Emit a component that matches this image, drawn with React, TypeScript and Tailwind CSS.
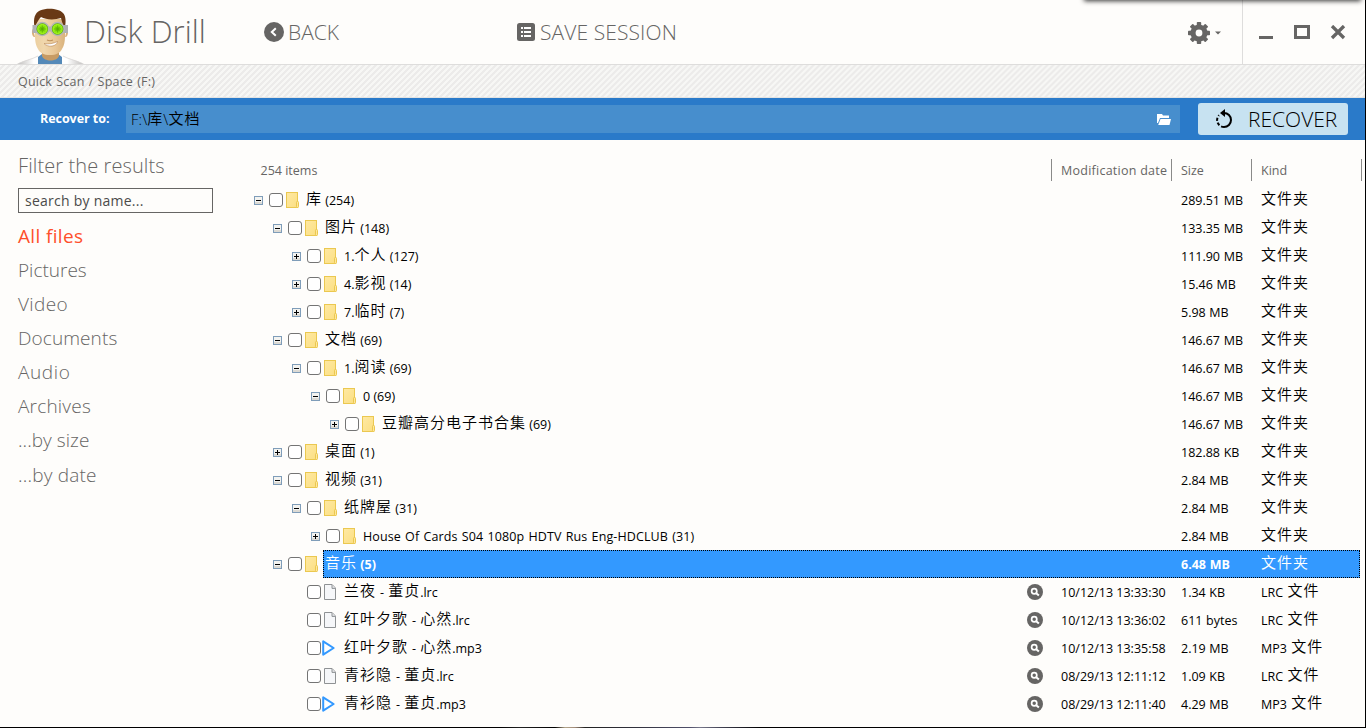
import React from "react";

type Row = {
  level: number;
  state?: "open" | "closed";
  icon: "folder" | "file" | "media";
  name: string;
  count?: string;
  date?: string;
  size: string;
  kind: string;
  selected?: boolean;
};

const folderKind = "文件夹";

const rows: Row[] = [
  { level: 0, state: "open", icon: "folder", name: "库", count: "(254)", size: "289.51 MB", kind: folderKind },
  { level: 1, state: "open", icon: "folder", name: "图片", count: "(148)", size: "133.35 MB", kind: folderKind },
  { level: 2, state: "closed", icon: "folder", name: "1.个人", count: "(127)", size: "111.90 MB", kind: folderKind },
  { level: 2, state: "closed", icon: "folder", name: "4.影视", count: "(14)", size: "15.46 MB", kind: folderKind },
  { level: 2, state: "closed", icon: "folder", name: "7.临时", count: "(7)", size: "5.98 MB", kind: folderKind },
  { level: 1, state: "open", icon: "folder", name: "文档", count: "(69)", size: "146.67 MB", kind: folderKind },
  { level: 2, state: "open", icon: "folder", name: "1.阅读", count: "(69)", size: "146.67 MB", kind: folderKind },
  { level: 3, state: "open", icon: "folder", name: "0", count: "(69)", size: "146.67 MB", kind: folderKind },
  { level: 4, state: "closed", icon: "folder", name: "豆瓣高分电子书合集", count: "(69)", size: "146.67 MB", kind: folderKind },
  { level: 1, state: "closed", icon: "folder", name: "桌面", count: "(1)", size: "182.88 KB", kind: folderKind },
  { level: 1, state: "open", icon: "folder", name: "视频", count: "(31)", size: "2.84 MB", kind: folderKind },
  { level: 2, state: "open", icon: "folder", name: "纸牌屋", count: "(31)", size: "2.84 MB", kind: folderKind },
  { level: 3, state: "closed", icon: "folder", name: "House Of Cards S04 1080p HDTV Rus Eng-HDCLUB", count: "(31)", size: "2.84 MB", kind: folderKind },
  { level: 1, state: "open", icon: "folder", name: "音乐", count: "(5)", size: "6.48 MB", kind: folderKind, selected: true },
  { level: 2, icon: "file", name: "兰夜 - 董贞.lrc", date: "10/12/13 13:33:30", size: "1.34 KB", kind: "LRC 文件" },
  { level: 2, icon: "file", name: "红叶夕歌 - 心然.lrc", date: "10/12/13 13:36:02", size: "611 bytes", kind: "LRC 文件" },
  { level: 2, icon: "media", name: "红叶夕歌 - 心然.mp3", date: "10/12/13 13:35:58", size: "2.19 MB", kind: "MP3 文件" },
  { level: 2, icon: "file", name: "青衫隐 - 董贞.lrc", date: "08/29/13 12:11:12", size: "1.09 KB", kind: "LRC 文件" },
  { level: 2, icon: "media", name: "青衫隐 - 董贞.mp3", date: "08/29/13 12:11:40", size: "4.29 MB", kind: "MP3 文件" },
];

const indents = ["pl-[9px]", "pl-[28px]", "pl-[47px]", "pl-[66px]", "pl-[85px]"];

const filters = [
  { label: "Pictures", spacing: "tracking-normal" },
  { label: "Video", spacing: "tracking-[0.4px]" },
  { label: "Documents", spacing: "tracking-[0.1px]" },
  { label: "Audio", spacing: "tracking-[0.6px]" },
  { label: "Archives", spacing: "tracking-[0.2px]" },
  { label: "...by size", spacing: "tracking-[0.05px]" },
  { label: "...by date", spacing: "tracking-[0.2px] pt-px" },
];

function Mixed({ text }: { text: string }) {
  const parts = text.match(/[\u4e00-\u9fff]+|[^\u4e00-\u9fff]+/g) ?? [];
  return (
    <>
      {parts.map((p, i) =>
        /[\u4e00-\u9fff]/.test(p) ? (
          <span
            key={i}
            className="relative -top-px font-['Noto_Sans_CJK_SC',sans-serif] text-[15px] leading-none font-[350] tracking-[1px]"
          >
            {p}
          </span>
        ) : (
          <span key={i}>{p}</span>
        )
      )}
    </>
  );
}

function Expander({ open }: { open: boolean }) {
  return (
    <svg width="9" height="9" viewBox="0 0 9 9" shapeRendering="crispEdges">
      <rect x="0.5" y="0.5" width="8" height="8" fill="#f3f3f0" stroke="#7f9db9" />
      <rect x="1" y="6" width="7" height="2" fill="#dcdad4" />
      <rect x="2" y="4" width="5" height="1" fill="#000" />
      {!open && <rect x="4" y="2" width="1" height="5" fill="#000" />}
    </svg>
  );
}

function FolderIcon() {
  return (
    <svg width="13" height="16" viewBox="0 0 13 16">
      <defs>
        <linearGradient id="folder" x1="0" y1="0" x2="1" y2="1">
          <stop offset="0" stopColor="#ffe9a3" />
          <stop offset="1" stopColor="#fbdf83" />
        </linearGradient>
      </defs>
      <rect x="0.5" y="0.5" width="11" height="15" fill="url(#folder)" stroke="#ebc850" />
      <rect x="10.5" y="9.5" width="2" height="6" rx="0.8" fill="#ffe79c" stroke="#ebc850" />
    </svg>
  );
}

function FileIcon() {
  return (
    <svg width="12" height="16" viewBox="0 0 12 16">
      <path d="M.5.5h7.6l3.4 3.6v11.4H.5z" fill="#f6f7f9" stroke="#8f9294" />
      <path d="M8 .8v3.6h3.4" fill="#e4e5e7" stroke="#8f9294" />
    </svg>
  );
}

function MediaIcon() {
  return (
    <svg width="13" height="16" viewBox="0 0 13 16">
      <path d="M1.2 1.3v13.4L11.6 8z" fill="#fff" stroke="#3399ff" strokeWidth="2" strokeLinejoin="round" />
    </svg>
  );
}

function Magnifier() {
  return (
    <svg width="16" height="16" viewBox="0 0 16 16">
      <circle cx="8" cy="8" r="8" fill="#666564" />
      <circle cx="7.2" cy="7.3" r="2.6" fill="none" stroke="#fff" strokeWidth="1.7" />
      <path d="M9.2 9.2l2.7 2.3" stroke="#fff" strokeWidth="2" />
    </svg>
  );
}

function Mascot() {
  return (
    <svg width="67" height="57" viewBox="0 0 67 57">
      <defs>
        <radialGradient id="lens">
          <stop offset="0" stopColor="#5fb800" />
          <stop offset="0.5" stopColor="#8be60c" />
          <stop offset="0.8" stopColor="#9df01a" />
          <stop offset="1" stopColor="#4c9c00" />
        </radialGradient>
        <linearGradient id="coat" x1="0" x2="1">
          <stop offset="0" stopColor="#bdbbb9" />
          <stop offset="0.25" stopColor="#fff" />
          <stop offset="0.75" stopColor="#fff" />
          <stop offset="1" stopColor="#bdbbb9" />
        </linearGradient>
        <linearGradient id="skin" x1="0" x2="1">
          <stop offset="0" stopColor="#eccf9f" />
          <stop offset="0.3" stopColor="#f0d7ad" />
          <stop offset="0.7" stopColor="#e8c594" />
          <stop offset="1" stopColor="#d9b27c" />
        </linearGradient>
      </defs>
      <path d="M0 57C8 53 16 52 21 49h25c5 3 13 4 21 8z" fill="url(#coat)" />
      <path d="M2 56.300C9 53 16 52 21 49M46 49c5 3 12 4 19 7.300" fill="none" stroke="#d8d6d4" strokeWidth=".8" />
      <path d="M21 50l4-3 8 6 8-6 4 3v7H21z" fill="#5489b8" />
      <path d="M25 41h17v8c-2 6-15 6-17 0z" fill="#c79b64" />
      <path d="M16 22c-2 1-1 9 2 8zM50 22c2 1 1 9-2 8z" fill="#d9af78" />
      <path d="M18 12h30v16c0 7-1 11-3 14-2 4-6 6-12 6s-10-2-12-6c-2-3-3-7-3-14z" fill="url(#skin)" />
      <path d="M17.500 20C16 11 18 6 23 3.500 31 0 43 2 46 6c3 3 3 9 2 14-3-3-3-6-4-9-6 2-15 2-20-1-3 3-4 6-6.500 10z" fill="#693915" />
      <path d="M30 33c2 1 4 1 6 0" fill="none" stroke="#c0925c" strokeWidth="1.200" />
      <path d="M27 36.500c5 1 9 0 13.500-2-.5 5-9.500 6.500-13.500 2z" fill="#fff" stroke="#b98552" strokeWidth=".6" />
      <path d="M15.500 18h5v8h-5zM46 18h5v8h-5zM29 19.500h8v5h-8z" fill="#aeb0b2" />
      <circle cx="25.300" cy="22" r="7.200" fill="#b4b6b8" />
      <circle cx="40.600" cy="22" r="7.200" fill="#b4b6b8" />
      <circle cx="25.300" cy="22" r="5.800" fill="url(#lens)" />
      <circle cx="40.600" cy="22" r="5.800" fill="url(#lens)" />
      <path
        d="M25.300 18.500v7m-3.500-3.500h7m8.300 0h7m-3.500-3.500v7M23 19.700l4.600 4.600m0-4.600L23 24.300m15.300-4.600l4.600 4.600m0-4.600l-4.600 4.600"
        stroke="#57ab03"
        strokeWidth=".7"
      />
    </svg>
  );
}

function Gear() {
  return (
    <svg width="22" height="22" viewBox="0 0 22 22">
      <g fill="#666564">
        <circle cx="11" cy="11" r="8.600" />
        {[0, 45, 90, 135].map((a) => (
          <rect key={a} x="8.800" y="0" width="4.400" height="22" rx="0.800" transform={`rotate(${a} 11 11)`} />
        ))}
      </g>
      <circle cx="11" cy="11" r="3.400" fill="#fefdfb" />
    </svg>
  );
}

function Header() {
  return (
    <header className="relative flex h-[65px] shrink-0 border-b border-[#dedddc] text-[#666564]">
      <div className="flex w-[264px] items-start pl-[17px]">
        <div className="flex h-[64px] items-end"><Mascot /></div>
        <h1 className="pt-[11px] text-[31px] leading-10 font-light tracking-[0.050px] whitespace-nowrap">Disk Drill</h1>
      </div>
      <button className="flex h-[64px] w-[252px] items-center">
        <svg width="20" height="20" viewBox="0 0 20 20">
          <circle cx="10" cy="10" r="10" fill="#666564" />
          <path d="M11.800 6.200L7.800 10l4 3.800" fill="none" stroke="#fff" strokeWidth="2" />
        </svg>
        <span className="pl-[4px] text-[21px] leading-7 font-light tracking-normal">BACK</span>
      </button>
      <button className="flex h-[64px] flex-1 items-center">
        <svg width="19" height="18" viewBox="0 0 19 18">
          <rect x="1" width="18" height="18" rx="2.500" fill="#666564" />
          <path d="M5 5h2m1 0h7M5 9h2m1 0h7M5 13h2m1 0h7" stroke="#fff" strokeWidth="2" />
        </svg>
        <span className="pl-[5px] text-[21px] leading-7 font-light tracking-[0.100px] whitespace-nowrap">SAVE SESSION</span>
      </button>
      <div className="flex h-[64px] w-[54px] items-center gap-[5px] pt-[2px]">
        <Gear />
        <svg width="6" height="4" viewBox="0 0 6 4"><path d="M0 .5h6L3 3.500z" fill="#666564" /></svg>
      </div>
      <div className="flex h-[64px] w-[123px] border-l border-[#dedddc] pt-[25px] pl-[16px]">
        <svg width="88" height="15" viewBox="0 0 88 15">
          <path d="M0 12.500h14" stroke="#666564" strokeWidth="3" />
          <rect x="36.500" y="1.500" width="13" height="11" fill="none" stroke="#666564" strokeWidth="3" />
          <path d="M73 1l12 12M85 1L73 13" stroke="#666564" strokeWidth="3.300" />
        </svg>
      </div>
      <div className="absolute top-[-9px] right-[5px] h-[8px] w-[275px] shadow-[0_1px_5px_1px_rgba(0,0,0,0.8)]" />
    </header>
  );
}

function RecoverBar() {
  return (
    <div className="flex h-[42px] shrink-0 items-center bg-[#2a7ac9]">
      <span className="w-[126px] pt-px pl-[40px] text-[12.500px] font-bold tracking-[-0.050px] text-white">Recover to:</span>
      <div className="flex h-[28px] w-[1054px] items-center justify-between bg-[#478ecd] pr-[9px] pl-[5px]">
        <span className="pt-[2px] text-[14.500px] leading-5 font-light tracking-[0.200px] text-black">
          <Mixed text="F:\库\文档" />
        </span>
        <svg width="14" height="11" viewBox="0 0 14 11" fill="#fff">
          <path d="M0 0h5l1 1.500h6V4H3L1 9 0 9z" />
          <path d="M3.500 5H14l-1.500 6H1.200z" />
        </svg>
      </div>
      <button className="ml-[18px] flex h-[32px] w-[150px] items-center rounded-[3px] bg-[#c7e2f1] text-black">
        <svg className="ml-[17px]" width="18" height="20" viewBox="0 0 18 20" fill="none" stroke="#000" strokeWidth="2">
          <path d="M9 4a7 7 0 0 1 0 14" />
          <path d="M9 18A7 7 0 0 1 4 6.200" strokeDasharray="3 2" />
          <path d="M10 0v8L5 4z" fill="#000" stroke="none" />
        </svg>
        <span className="pl-[15px] text-[21px] leading-7 font-light tracking-normal">RECOVER</span>
      </button>
    </div>
  );
}

function Sidebar() {
  return (
    <aside className="w-[245px] shrink-0 pl-[18px] text-[#666564]">
      <h2 className="mt-[12px] h-[36px] text-[20px] leading-7 font-light tracking-[0.100px]">Filter the results</h2>
      <div className="flex h-[25px] w-[195px] items-center border border-[#666564] pl-[6px] text-[14px] tracking-[0.250px] text-[#4b4b4a]">
        search by name...
      </div>
      <nav className="pt-[6px] text-[19px]">
        <div className="h-[34px] leading-[34px] tracking-[0.350px] text-[#ff4f2b]">All files</div>
        {filters.map((f) => (
          <div key={f.label} className={`h-[34px] leading-[34px] font-light ${f.spacing}`}>{f.label}</div>
        ))}
      </nav>
    </aside>
  );
}

function TreeRow({ row }: { row: Row }) {
  const tone = row.selected ? "bg-[#3399ff] text-white font-bold outline-1 -outline-offset-1 outline-dotted outline-black" : "text-black";
  const wide = row.name.length > 20 ? "tracking-[0.1px] [word-spacing:0.9px]" : row.date ? "[word-spacing:0.8px]" : "";
  return (
    <div className={`flex h-[28px] ${indents[row.level]}`}>
      <div className="-mr-[16px] flex w-[69px] shrink-0 items-center">
        <div className="w-[15px]">{row.state && <Expander open={row.state === "open"} />}</div>
        <div className="h-[14px] w-[14px] rounded-[3px] border border-[#747474] bg-white" />
        <div className={row.icon === "media" ? "pl-px" : "pl-[3px]"}>
          {row.icon === "folder" ? <FolderIcon /> : row.icon === "file" ? <FileIcon /> : <MediaIcon />}
        </div>
      </div>
      <div className={`z-10 -ml-[3px] flex min-w-0 flex-1 items-center pl-[2px] ${tone}`}>
        <div className={`flex-1 pt-[2px] whitespace-pre ${wide}`}>
          <Mixed text={row.name} />
          {row.count && <span>{" " + row.count}</span>}
        </div>
        <div className="flex w-[34px]">{row.date && <Magnifier />}</div>
        <div className="w-[120px] pt-[2px]">{row.date}</div>
        <div className="w-[80px] pt-[2px] [word-spacing:0.4px]">{row.size}</div>
        <div className="w-[99px] pt-[2px] [word-spacing:1px]"><Mixed text={row.kind} /></div>
      </div>
    </div>
  );
}

function Results() {
  return (
    <main className="w-[1115px] shrink-0 text-[12.500px]">
      <div className="flex h-[46px] pt-[19px] text-[#666564]">
        <div className="flex-1 pt-[3px] pl-[15.500px]">254 items</div>
        <div className="h-[22px] w-[120px] border-l border-[#8a8a89] pt-[3px] pl-[9px] tracking-[0.250px] whitespace-nowrap">Modification date</div>
        <div className="h-[22px] w-[80px] border-l border-[#8a8a89] pt-[3px] pl-[9px]">Size</div>
        <div className="h-[22px] w-[109px] border-l border-[#8a8a89] pt-[3px] pl-[9px]">Kind</div>
      </div>
      {rows.map((r, i) => (
        <TreeRow key={i} row={r} />
      ))}
    </main>
  );
}

export default function App() {
  return (
    <div className="h-[728px] w-[1366px] overflow-hidden border-r border-black bg-[#fefdfb] font-['Open_Sans','Noto_Sans_CJK_SC',sans-serif]">
      <div className="flex h-full flex-col">
        <Header />
        <div className="h-[33px] shrink-0 border-b border-[#e3e3e2] bg-[repeating-linear-gradient(135deg,#f7f7f5_0px,#f7f7f5_1.620px,#ecebea_2.120px,#ecebea_3.740px,#f7f7f5_4.240px)] pl-[18px] text-[12.500px] leading-[33px] tracking-[0.200px] text-[#666564] [word-spacing:0.7px]">
          Quick Scan / Space (F:)
        </div>
        <RecoverBar />
        <div className="flex min-h-0 flex-1">
          <Sidebar />
          <Results />
          <div className="mt-[19px] ml-px h-[22px] w-px bg-[#8a8a89]" />
        </div>
        <div className="h-px shrink-0 bg-[linear-gradient(90deg,#000_500px,#222_520px,#000_555px,#b3a58a_565px,#a08a78_575px,#222_585px,#33333f_640px,#50506a_690px,#77778a_700px,#444455_720px,#000_760px)]" />
      </div>
    </div>
  );
}
